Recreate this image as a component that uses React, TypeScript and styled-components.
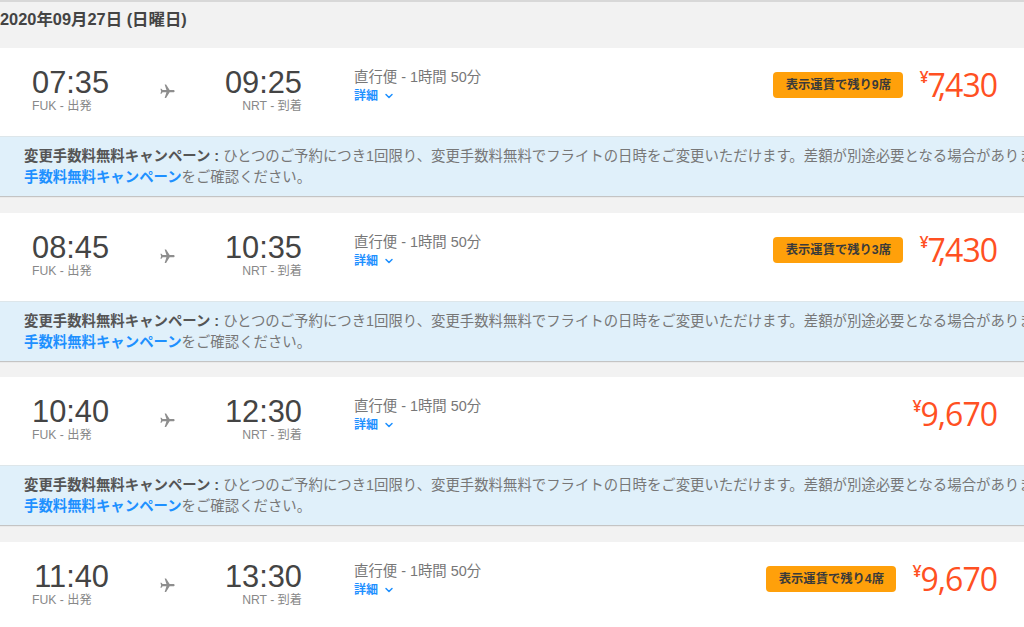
import styled, { createGlobalStyle } from 'styled-components';
import { MdFlight } from 'react-icons/md';
import { FiChevronDown } from 'react-icons/fi';

const GlobalStyle = createGlobalStyle`
	html, body {
		margin: 0;
		padding: 0;
		height: 627px;
		overflow: hidden;
		background: #f2f2f2;
		font-family: 'Liberation Sans', 'Noto Sans CJK JP', sans-serif;
	}
`;

const Page = styled.div`
	width: 1024px;
	height: 627px;
	overflow: hidden;
	border-top: 2px solid #d8d8d8;
	box-sizing: border-box;
`;

const DateHeading = styled.h2`
	margin: 0;
	height: 46px;
	padding-top: 8px;
	box-sizing: border-box;
	font-size: 16.4px;
	line-height: 18px;
	font-weight: 700;
	color: #444;
`;

const FlightList = styled.div`
	display: flex;
	flex-direction: column;
	gap: 16.67px;
`;

const Card = styled.section`
	display: flex;
	flex-direction: column;
	box-shadow: 0 1px 1px #c4c4c4;
`;

const Row = styled.div`
	display: flex;
	align-items: flex-start;
	height: 88px;
	padding: 19px 27px 0 32px;
	box-sizing: border-box;
	background: #fff;
`;

const Stop = styled.div<{ $narrow?: boolean }>`
	width: ${(p) => (p.$narrow ? '77px' : '78px')};
	display: flex;
	flex-direction: column;
`;

const Time = styled.div`
	margin-top: -1px;
	font-size: 30.8px;
	line-height: 34px;
	text-align: right;
	color: #444;
`;

const Place = styled.div<{ $right?: boolean }>`
	font-size: 12.2px;
	line-height: 14px;
	margin-top: -1px;
	color: #888;
	white-space: nowrap;
	text-align: ${(p) => (p.$right ? 'right' : 'left')};
`;

const PlaneBox = styled.div`
	width: 115px;
	height: 34px;
	padding: 16px 0 0 50px;
	box-sizing: border-box;
	color: #8e8e8e;
	line-height: 0;

	svg {
		transform: rotate(90deg);
	}
`;

const Info = styled.div`
	margin-left: 52px;
	padding-top: 1px;
	flex: 1;
`;

const Duration = styled.div`
	font-size: 14.4px;
	line-height: 18px;
	color: #777;
`;

const DetailLink = styled.a`
	display: flex;
	align-items: center;
	gap: 5px;
	margin-top: 1px;
	font-size: 12px;
	line-height: 18px;
	font-weight: 700;
	color: #1e90ff;
`;

const Fare = styled.div`
	display: flex;
	align-items: flex-start;
`;

const Badge = styled.div`
	width: 130px;
	height: 26px;
	margin: 5px 16px 0 0;
	border-radius: 4px;
	background: #ffa00a;
	color: #3a3a3a;
	font-size: 12.3px;
	line-height: 26px;
	font-weight: 700;
	text-align: center;
`;

const Price = styled.div`
	display: flex;
	align-items: flex-start;
	margin-top: -1px;
	color: #ff5022;
	font-family: 'Open Sans', sans-serif;
	font-size: 32px;
	line-height: 38px;
	letter-spacing: -1px;
`;

const Yen = styled.span`
	font-size: 16px;
	font-weight: 600;
	line-height: 22px;
	margin-right: -1px;
	letter-spacing: 0;
`;

// the reference tucks the comma under the 7
const KernedSeven = styled.span`
	margin-right: -7px;
`;

const Notice = styled.div`
	height: 60px;
	padding: 9px 0 0 24px;
	box-sizing: border-box;
	background: #e0f0fa;
	border-top: 1px solid #dde6ea;
	font-size: 14.4px;
	line-height: 21px;
	color: #777;
	white-space: nowrap;
	overflow: hidden;
`;

const NoticeTitle = styled.strong`
	color: #555;
`;

const NoticeLink = styled.a`
	font-weight: 700;
	color: #1e90ff;
`;

const flights = [
	{ dep: '07:35', arr: '09:25', price: '7,430', seats: 9 },
	{ dep: '08:45', arr: '10:35', price: '7,430', seats: 3 },
	{ dep: '10:40', arr: '12:30', price: '9,670' },
	{ dep: '11:40', arr: '13:30', price: '9,670', seats: 4 },
];

const App = () => {
	return (
		<Page>
			<GlobalStyle />
			<DateHeading>2020年09月27日 (日曜日)</DateHeading>
			<FlightList>
				{flights.map((f) => (
					<Card key={f.dep}>
						<Row>
							<Stop $narrow>
								<Time>{f.dep}</Time>
								<Place>FUK - 出発</Place>
							</Stop>
							<PlaneBox>
								<MdFlight size={17} />
							</PlaneBox>
							<Stop>
								<Time>{f.arr}</Time>
								<Place $right>NRT - 到着</Place>
							</Stop>
							<Info>
								<Duration>直行便 - 1時間 50分</Duration>
								<DetailLink>
									詳細 <FiChevronDown size={12} strokeWidth={3} />
								</DetailLink>
							</Info>
							<Fare>
								{f.seats && <Badge>表示運賃で残り{f.seats}席</Badge>}
								<Price>
									<Yen>¥</Yen>
									{f.price.startsWith('7') ? (
										<>
											<KernedSeven>7</KernedSeven>
											{f.price.slice(1)}
										</>
									) : (
										f.price
									)}
								</Price>
							</Fare>
						</Row>
						<Notice>
							<NoticeTitle>変更手数料無料キャンペーン : </NoticeTitle>
							ひとつのご予約につき1回限り、変更手数料無料でフライトの日時をご変更いただけます。差額が別途必要となる場合があります。
							<br />
							<NoticeLink>手数料無料キャンペーン</NoticeLink>をご確認ください。
						</Notice>
					</Card>
				))}
			</FlightList>
		</Page>
	);
};

export default App;
